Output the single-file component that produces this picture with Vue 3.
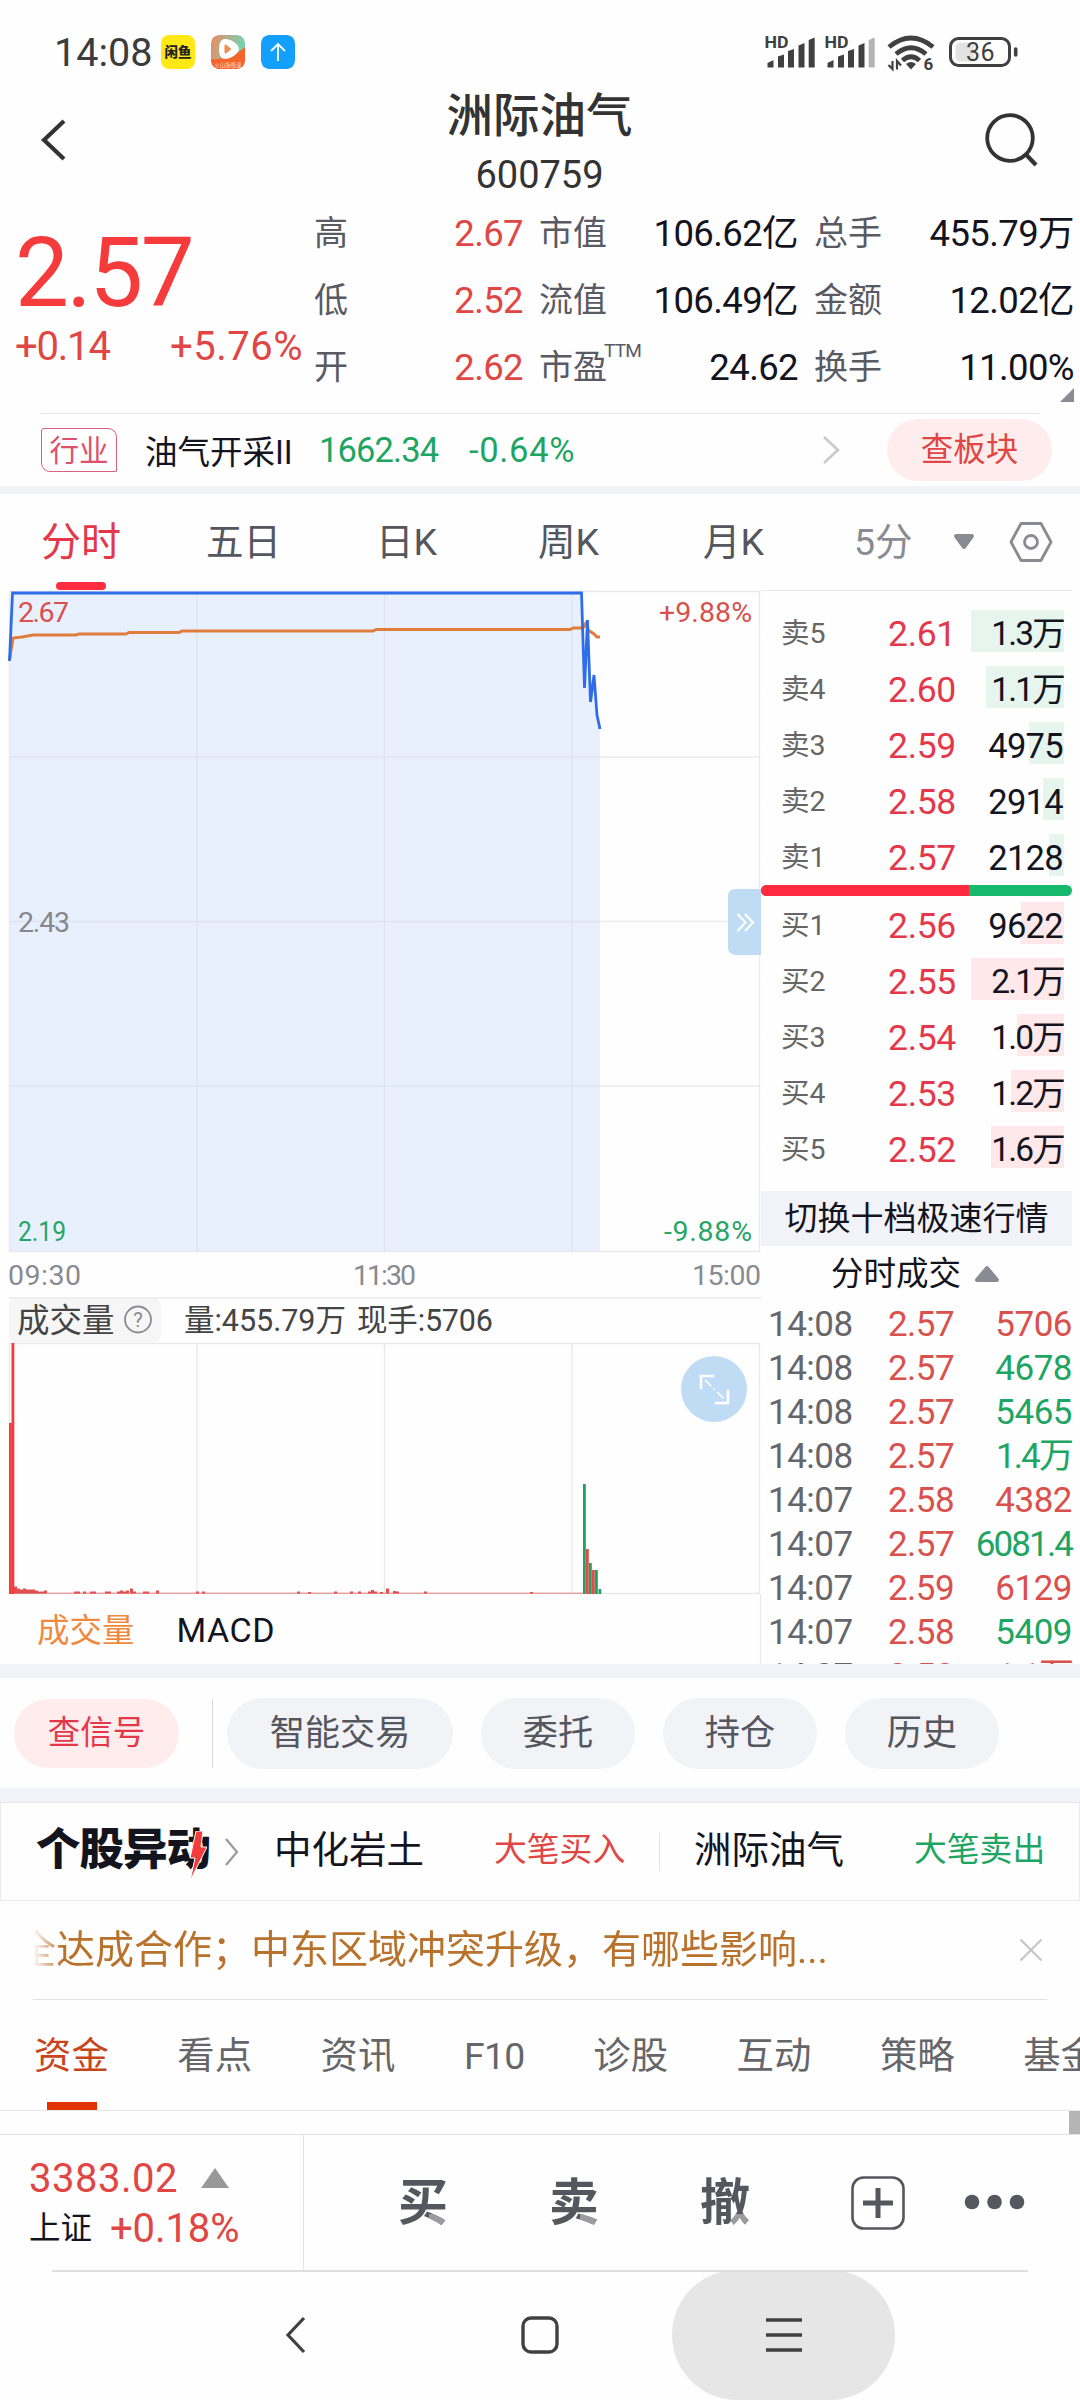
<script setup>
const stats = [
  { k: '高', v: '2.67', up: true }, { k: '市值', v: '106.62亿' }, { k: '总手', v: '455.79万' },
  { k: '低', v: '2.52', up: true }, { k: '流值', v: '106.49亿' }, { k: '金额', v: '12.02亿' },
  { k: '开', v: '2.62', up: true }, { k: '市盈', sup: 'TTM', v: '24.62' }, { k: '换手', v: '11.00%' },
]
const periods = [
  { t: '五日', w: 170 }, { t: '日K', w: 162 }, { t: '周K', w: 165 }, { t: '月K', w: 151 },
]
const sells = [
  { k: '卖5', p: '2.61', v: '1.3万', w: 93 },
  { k: '卖4', p: '2.60', v: '1.1万', w: 78 },
  { k: '卖3', p: '2.59', v: '4975', w: 35 },
  { k: '卖2', p: '2.58', v: '2914', w: 21 },
  { k: '卖1', p: '2.57', v: '2128', w: 15 },
]
const buys = [
  { k: '买1', p: '2.56', v: '9622', w: 43 },
  { k: '买2', p: '2.55', v: '2.1万', w: 93 },
  { k: '买3', p: '2.54', v: '1.0万', w: 47 },
  { k: '买4', p: '2.53', v: '1.2万', w: 53 },
  { k: '买5', p: '2.52', v: '1.6万', w: 73 },
]
const trades = [
  { t: '14:08', p: '2.57', v: '5706', up: true },
  { t: '14:08', p: '2.57', v: '4678' },
  { t: '14:08', p: '2.57', v: '5465' },
  { t: '14:08', p: '2.57', v: '1.4万', tight: true },
  { t: '14:07', p: '2.58', v: '4382', up: true },
  { t: '14:07', p: '2.57', v: '6081.4', tight: true },
  { t: '14:07', p: '2.59', v: '6129', up: true },
  { t: '14:07', p: '2.58', v: '5409' },
  { t: '14:07', p: '2.58', v: '1.1万', up: true, tight: true },
]
const actions = [{ t: '智能交易', w: 226 }, { t: '委托', w: 154 }, { t: '持仓', w: 154 }, { t: '历史', w: 154 }]
const infoTabs = ['资金', '看点', '资讯', 'F10', '诊股', '互动', '策略', '基金']

// [x, height] of the small red volume bars along the baseline
const smallBars = [
  [14, 7], [17, 5], [20, 4], [23, 5], [26, 4], [29, 4], [32, 4], [35, 3], [38, 2], [41, 2], [44, 3],
  [74, 2], [77, 2], [83, 2], [90, 2], [93, 2], [105, 2], [108, 2], [117, 2], [120, 3], [123, 2], [126, 3], [130, 5], [133, 2],
  [143, 2], [146, 2], [156, 3], [196, 2], [202, 2], [297, 2], [308, 1.5], [334, 2], [350, 2], [358, 2],
  [368, 2], [371, 3.5], [374, 2], [380, 1.5], [386, 5], [393, 2.5], [396, 2], [424, 2], [530, 1.5],
]
const bigBars = [
  { x: 9, y: 1423, c: '#f23b3b' }, { x: 11.5, y: 1343, c: '#f23b3b' },
  { x: 583, y: 1484, c: '#1aa565' }, { x: 586, y: 1549, c: '#d9504c' },
  { x: 589, y: 1563, c: '#1aa565' }, { x: 592, y: 1570, c: '#d9504c' },
  { x: 595, y: 1570, c: '#1aa565' }, { x: 598.5, y: 1589, c: '#1aa565' },
]
</script>

<template>
  <div class="screen">
    <div class="status">
      <span class="clock">14:08</span>
      <span class="app fish">闲鱼</span>
      <svg class="app" width="34" height="34" viewBox="0 0 34 34">
        <defs>
          <linearGradient id="g1" x1="0" y1="0" x2="1" y2="0.3"><stop offset="0" stop-color="#ef8a62" /><stop offset="1" stop-color="#6fd6b4" /></linearGradient>
        </defs>
        <rect width="34" height="34" rx="8" fill="url(#g1)" />
        <path d="M0 24 Q18 26 34 12 V26 A8 8 0 0 1 26 34 H8 A8 8 0 0 1 0 26 Z" fill="#f4642b" />
        <path d="M14 4 C21 4 28 10 28 14 C28 18 20 24 14 24 C10 24 8 20 8 14 C8 8 10 4 14 4 Z" fill="#fff" />
        <path d="M14.500 10.500 L19 14 L14.500 17.500 Z" fill="#f08c50" stroke="#f08c50" stroke-width="2" stroke-linejoin="round" />
        <text x="17" y="31.500" font-size="5.500" text-anchor="middle" fill="#ffd9c4">火山版极速</text>
      </svg>
      <svg class="app" width="34" height="34" viewBox="0 0 34 34">
        <rect width="34" height="34" rx="8" fill="#12a0fb" />
        <path d="M17 26 V9 M10 16 L17 9 L24 16" fill="none" stroke="#fff" stroke-width="1.800" />
      </svg>
      <svg class="sys" width="260" height="50" viewBox="760 28 260 50">
        <g v-for="o in [0, 60]" :key="o" :transform="`translate(${o} 0)`" fill="#404040">
          <text x="764.500" y="47.800" font-size="16" font-weight="700" textLength="24" lengthAdjust="spacingAndGlyphs">HD</text>
          <path d="M767.500 67.500 V63 L773.500 60 V67.500 Z M778 67.500 V56.500 L784 54.500 V67.500 Z M788 67.500 V51 L794 49 V67.500 Z M798.500 67.500 V45.500 L804.500 43 V67.500 Z" />
          <path d="M808.700 67.500 V40 L814.700 37.500 V67.500 Z" :fill="o ? '#b4b4b4' : '#404040'" />
        </g>
        <g fill="none" stroke="#404040" stroke-width="4.800">
          <path d="M889 47 Q911 29 933 47" />
          <path d="M896 54 Q911 41.500 926 54" />
          <path d="M902.500 60.500 Q911 53 919.500 60.500" />
        </g>
        <path d="M906 64 Q911 60 916 64 L911 69.500 Z" fill="#404040" />
        <path d="M892.500 61 V69 L888.500 65 M897 69.500 V61 L901 65.500" fill="none" stroke="#404040" stroke-width="2.200" />
        <text x="923.500" y="70" font-size="17" font-weight="700" fill="#404040">6</text>
        <rect x="950.500" y="38.500" width="59" height="27" rx="8" fill="none" stroke="#404040" stroke-width="3" />
        <path d="M962 42.500 H974 V61.500 H962 Q955.500 61.500 955.500 56 V48 Q955.500 42.500 962 42.500" fill="#e3e3e3" />
        <path d="M1015.700 49 V55" stroke="#404040" stroke-width="3.600" stroke-linecap="round" />
        <text x="966" y="61" font-size="25" textLength="28.500" fill="#404040">36</text>
      </svg>
    </div>

    <header class="head">
      <svg class="back" width="30" height="50" viewBox="0 0 30 50"><path d="M26 6 L6 25 L26 44" fill="none" stroke="#333" stroke-width="4.200" /></svg>
      <div class="title"><b>洲际油气</b><span>600759</span></div>
      <svg width="56" height="56" viewBox="0 0 56 56"><circle cx="27" cy="26" r="22.800" fill="none" stroke="#333" stroke-width="3.800" /><path d="M43 42.500 L53 53" stroke="#333" stroke-width="4.200" /></svg>
    </header>

    <section class="quote">
      <div class="price">
        <div class="big">2.57</div>
        <div class="chg"><span>+0.14</span><span>+5.76%</span></div>
      </div>
      <div class="stats">
        <div v-for="s in stats" :key="s.k" class="stat">
          <span class="k">{{ s.k }}<sup v-if="s.sup">{{ s.sup }}</sup></span>
          <span class="v" :class="{ up: s.up }">{{ s.v }}</span>
        </div>
      </div>
      <i class="corner"></i>
    </section>

    <section class="industry">
      <span class="tag">行业</span>
      <span class="iname">油气开采II</span>
      <span class="ival">1662.34</span>
      <span class="ipct">-0.64%</span>
      <svg width="20" height="32" viewBox="0 0 20 32"><path d="M2 3 L16 16 L2 29" fill="none" stroke="#c8c8cc" stroke-width="2.500" /></svg>
      <span class="pill-red board">查板块</span>
    </section>
    <div class="band thin"></div>

    <nav class="periods">
      <span class="on">分时</span>
      <span v-for="p in periods" :key="p.t" :style="{ width: p.w + 'px' }">{{ p.t }}</span>
      <span class="min">5分</span>
      <svg class="tri" width="24" height="18" viewBox="0 0 24 18"><path d="M4 3 H20 L12 14 Z" fill="#8a8a92" stroke="#8a8a92" stroke-width="4" stroke-linejoin="round" /></svg>
      <svg width="44" height="42" viewBox="0 0 44 42"><path d="M12 2.500 H32 L42 21 L32 39.500 H12 L2 21 Z" fill="none" stroke="#8a8a92" stroke-width="2.800" stroke-linejoin="round" /><circle cx="22" cy="21" r="6.500" fill="none" stroke="#8a8a92" stroke-width="2.800" /></svg>
    </nav>

    <main class="market">
      <svg class="chart" width="761" height="1074" viewBox="0 590 761 1074">
        <path d="M9.500 661 L12.500 593 H581.500 L584.500 688 L587.500 620 L590.500 702 L594 675 L597 715 L600 729 V1251 H9.500 Z" fill="#e8f0fe" />
        <g stroke="#dfe4ee" stroke-width="1.300">
          <path d="M197 592 V1251 M384.500 592 V1251 M572 592 V1251 M10 757 H600 M10 921.500 H600 M10 1086 H600" />
          <path d="M600 757 H760 M600 921.500 H760 M600 1086 H760" stroke="#ececee" />
        </g>
        <path d="M9.500 591.500 H759.500 V1251.500 H9.500 Z M9 1298 H761 M9.500 1343.500 H759.500 V1593.500 H9.500 Z M197 1344 V1593 M384.500 1344 V1593 M572 1344 V1593 M760.500 1594 V1664" fill="none" stroke="#e9e9ec" stroke-width="1.300" />
        <path d="M9.500 660 L13 638 L22 637 L33 635 H76 L79 634 H126 L129 632.500 H179 L182 631 H373 L376 629.500 H570 L573 628 H583 L586 623 L588 630 L594 634 L597 637 H600" fill="none" stroke="#e07c3c" stroke-width="3" />
        <path d="M9.500 661 L12.500 593 H581.500 L584.500 688 L587.500 620 L590.500 702 L594 675 L597 715 L600 729" fill="none" stroke="#2f6de8" stroke-width="2.800" />
        <g font-size="28.500">
          <text x="18" y="622" textLength="51" fill="#d9504c">2.67</text>
          <text x="659" y="622" textLength="93" fill="#d9504c">+9.88%</text>
          <text x="18" y="932" textLength="52" fill="#87878c">2.43</text>
          <text x="18" y="1241" textLength="48" lengthAdjust="spacingAndGlyphs" fill="#27a567">2.19</text>
          <text x="664" y="1241" textLength="88" fill="#27a567">-9.88%</text>
          <text x="8" y="1285" textLength="73" fill="#8a8a90">09:30</text>
          <text x="353" y="1285" textLength="63" fill="#8a8a90">11:30</text>
          <text x="692" y="1285" textLength="69" fill="#8a8a90">15:00</text>
        </g>
        <path d="M761 889 H736 Q728 889 728 897 V947 Q728 955 736 955 H761 Z" fill="#c0dcf5" />
        <path d="M737.500 914 L745.500 922.500 L737.500 931 M745 914 L753 922.500 L745 931" fill="none" stroke="#fff" stroke-width="2" />

        <rect x="9" y="1299" width="152" height="43" rx="7" fill="#f6f6f7" />
        <text x="17" y="1332" font-size="32.500" fill="#444">成交量</text>
        <circle cx="138" cy="1319.500" r="13" fill="none" stroke="#8a8a90" stroke-width="1.800" />
        <text x="138" y="1327" font-size="20" text-anchor="middle" fill="#8a8a90">?</text>
        <text x="184" y="1330.500" font-size="30.500" textLength="162" fill="#444">量:455.79万</text>
        <text x="357" y="1330.500" font-size="30.500" textLength="136" fill="#444">现手:5706</text>

        <path d="M14 1593.200 H583" stroke="#e68080" stroke-width="1" />
        <rect v-for="b in smallBars" :key="b[0]" :x="b[0]" :y="1593.500 - b[1]" width="3" :height="b[1]" fill="#e05050" />
        <rect v-for="b in bigBars" :key="b.x" :x="b.x" :y="b.y" width="2.800" :height="1594 - b.y" :fill="b.c" />
        <circle cx="714" cy="1389" r="33" fill="#c0dcf5" />
        <path d="M701 1389 V1376 H714 M715 1403 H728 V1390" fill="none" stroke="#fff" stroke-width="2.600" />
        <path d="M705 1380 L725 1400" stroke="#fff" stroke-width="1.500" stroke-dasharray="9 3 2 3" />
        <text x="37" y="1642" font-size="32.500" fill="#ee8a40">成交量</text>
        <text x="176.500" y="1641.500" font-size="34" textLength="98" fill="#14141e">MACD</text>
      </svg>

      <aside class="book">
        <div class="sell">
          <div v-for="r in sells" :key="r.k" class="lv"><span>{{ r.k }}</span><em>{{ r.p }}</em><span class="q"><i :style="{ width: r.w + 'px' }"></i><b :class="{ wan: r.v.includes('万') }">{{ r.v }}</b></span></div>
        </div>
        <div class="ratio"><i></i></div>
        <div class="buy">
          <div v-for="r in buys" :key="r.k" class="lv"><span>{{ r.k }}</span><em>{{ r.p }}</em><span class="q"><i :style="{ width: r.w + 'px' }"></i><b :class="{ wan: r.v.includes('万') }">{{ r.v }}</b></span></div>
        </div>
        <div class="switch">切换十档极速行情</div>
        <div class="thead">分时成交<svg width="26" height="20" viewBox="0 0 26 20"><path d="M3 16 H23 L13 4 Z" fill="#8a8a92" stroke="#8a8a92" stroke-width="4" stroke-linejoin="round" /></svg></div>
        <div v-for="(r, i) in trades" :key="i" class="tr"><span>{{ r.t }}</span><em>{{ r.p }}</em><b :class="{ up: r.up, tight: r.tight }">{{ r.v }}</b></div>
      </aside>
    </main>

    <div class="band b14"></div>
    <section class="actions">
      <span class="pill-red sig">查信号</span>
      <i></i>
      <span v-for="a in actions" :key="a.t" class="act" :style="{ width: a.w + 'px' }">{{ a.t }}</span>
    </section>
    <div class="band b14"></div>

    <section class="moves">
      <span class="logo">个股异动
        <svg width="18" height="50" viewBox="0 0 18 50"><path d="M7 0 H14 L12 16 H18 L1 50 L6 27 H1 Z" fill="#f23b3b" stroke="#fff" stroke-width="1" /></svg>
      </span>
      <svg class="arr" width="16" height="30" viewBox="0 0 16 30"><path d="M2 2 L13 15 L2 28" fill="none" stroke="#99999e" stroke-width="2.200" /></svg>
      <span class="nm">中化岩土</span><span class="op up">大笔买入</span>
      <i></i>
      <span class="nm">洲际油气</span><span class="op down">大笔卖出</span>
    </section>

    <section class="notice">
      <div class="clip"><span>全达成合作；中东区域冲突升级，有哪些影响...</span></div>
      <svg width="24" height="24" viewBox="0 0 24 24"><path d="M1.500 1.500 L22.500 22.500 M22.500 1.500 L1.500 22.500" stroke="#c6c6ca" stroke-width="2.200" /></svg>
    </section>

    <nav class="info">
      <span v-for="(t, i) in infoTabs" :key="t" :class="{ on: i === 0 }">{{ t }}</span>
    </nav>
    <div class="peek"><i></i></div>

    <section class="dock">
      <div class="index">
        <div class="l1">3383.02<svg width="28" height="20" viewBox="0 0 28 20"><path d="M0 20 L14 0 L28 20 Z" fill="#999" /></svg></div>
        <div class="l2"><span>上证</span>+0.18%</div>
      </div>
      <div class="btns">
        <span>买</span><span>卖</span><span>撤</span>
        <svg width="54" height="54" viewBox="0 0 54 54"><rect x="1.500" y="1.500" width="51" height="51" rx="11" fill="none" stroke="#55565e" stroke-width="2.600" /><path d="M27 12 V42 M12 27 H42" stroke="#55565e" stroke-width="5" /></svg>
        <svg class="dots" width="62" height="16" viewBox="0 0 62 16"><g fill="#55565e"><circle cx="8" cy="8" r="7.300" /><circle cx="30.500" cy="8" r="7.300" /><circle cx="53" cy="8" r="7.300" /></g></svg>
      </div>
    </section>

    <footer class="sysnav">
      <svg class="nb" width="24" height="38" viewBox="0 0 24 38"><path d="M20 2 L4 19 L20 36" fill="none" stroke="#404040" stroke-width="3.200" /></svg>
      <svg class="nh" width="38" height="38" viewBox="0 0 38 38"><rect x="2" y="2" width="34" height="34" rx="8" fill="none" stroke="#404040" stroke-width="3.400" /></svg>
      <div class="nm3"><svg width="36" height="34" viewBox="0 0 36 34"><path d="M0 2 H36 M0 17 H36 M0 32 H36" stroke="#404040" stroke-width="3.600" /></svg></div>
    </footer>
  </div>
</template>

<style>
body { margin: 0; background: #fefefe; }
</style>

<style scoped>
.screen { width: 1080px; height: 2400px; overflow: hidden; background: #fefefe; font-family: Roboto, "Noto Sans CJK SC", sans-serif; color: #14141e; display: flex; flex-direction: column; }
.screen * { box-sizing: border-box; }
.screen > * { flex: none; }
i, em { font-style: normal; }
svg { display: block; flex: none; }
.up { color: #e04644; }
.down { color: #1ea564; }

.status { height: 100px; display: flex; align-items: flex-start; padding-left: 54px; }
.clock { width: 107px; font-size: 39.500px; line-height: 105px; letter-spacing: 0; color: #3c3c3c; }
.app { width: 34px; height: 34px; border-radius: 8px; margin: 35px 16px 0 0; }
.fish { background: #ffe815; font-size: 13.500px; font-weight: 900; line-height: 34px; text-align: center; color: #222; }
.sys { margin: 28px 0 0 449px; }

.head { height: 99px; display: flex; justify-content: space-between; padding: 0 41px 0 38px; }
.back { margin-top: 15px; }
.title { display: flex; flex-direction: column; align-items: center; width: 300px; margin-left: 28px; color: #333; }
.title b { margin-top: 1px; font-size: 46.500px; font-weight: 500; line-height: 30px; }
.title span { font-size: 38px; line-height: 30px; margin-top: 29px; }
.head > svg:last-child { margin-top: 12px; }

.quote { position: relative; height: 214px; display: flex; margin: 0 41px 0 0; }
.price { width: 314px; padding-left: 15px; flex: none; }
.big { font-size: 96px; line-height: 100px; margin-top: 24px; letter-spacing: -2.500px; color: #f53b3b; }
.chg { display: flex; font-size: 40px; line-height: 40px; margin-top: 4px; color: #e04644; letter-spacing: -1.200px; }
.chg span:first-child { width: 155px; }
.chg span:last-child { letter-spacing: 0.500px; }
.stats { display: grid; grid-template-columns: 209px 259px 260px; column-gap: 16px; grid-auto-rows: 67px; flex: none; padding-top: 1px; }
.stat { display: flex; justify-content: space-between; line-height: 67px; white-space: nowrap; }
.k { font-size: 34px; color: #5a5a62; }
.k sup { display: inline-block; font-size: 19px; line-height: 20px; vertical-align: 22px; letter-spacing: -0.800px; margin-left: -3px; }
.v { font-size: 36.500px; letter-spacing: -0.600px; }
.corner { position: absolute; left: 1060px; top: 189px; border-left: 14px solid transparent; border-bottom: 14px solid #8a8a92; }

.industry { height: 73px; display: flex; align-items: center; position: relative; padding: 0 28px 0 41px; }
.industry::before { content: ""; position: absolute; left: 41px; right: 41px; top: 0; height: 1px; background: #e6e6ea; }
.tag { width: 76px; height: 44px; border: 1.500px solid #d9607a; border-radius: 3px 9px 1px 9px; font-size: 29.500px; line-height: 44px; text-align: center; color: #e0506a; }
.iname { margin-left: 28px; width: 174px; font-size: 32.500px; }
.ival { width: 150px; font-size: 34.500px; letter-spacing: -0.900px; color: #1ea564; }
.ipct { width: 353px; font-size: 34.500px; letter-spacing: 0.700px; color: #1ea564; }
.pill-red { background: #ffedee; border-radius: 36px; font-size: 32.500px; text-align: center; color: #e04644; }
.board { margin-left: auto; width: 165px; height: 62px; line-height: 63px; }

.band { background: #f2f3f8; }
.thin { height: 8px; }
.b14 { height: 14px; }

.periods { height: 96px; display: flex; align-items: center; padding: 0 27px 0 41px; line-height: 97px; font-size: 37.500px; color: #55565e; }
.periods .on { position: relative; width: 165px; height: 96px; font-size: 40px; color: #e5374a; }
.periods .on::after { content: ""; position: absolute; left: 15px; bottom: 0; width: 50px; height: 8px; border-radius: 4px; background: #ff2d42; }
.periods .min { width: 98px; color: #8a8a92; }
.periods .tri { margin-right: 33px; }

.market { height: 1074px; display: flex; overflow: hidden; }
.chart { flex: none; }
.book { width: 311px; border-top: 1px solid #e9e9ec; }
.sell { padding-top: 15px; height: 294px; }
.lv { display: flex; height: 56px; align-items: center; line-height: 56px; padding-left: 20px; }
.lv > span:first-child { width: 80px; font-size: 28.500px; color: #666; }
.lv em { width: 122px; text-align: center; font-size: 35.500px; letter-spacing: -0.300px; color: #e5374a; }
.q { position: relative; width: 81px; height: 56px; }
.q i { position: absolute; right: 0; top: 4px; height: 42px; background: #e6f5ee; }
.buy .q i { background: #ffe8ea; }
.q b { position: absolute; right: 1px; top: 0; font-weight: 400; font-size: 34.500px; letter-spacing: -0.700px; white-space: nowrap; }
.q b.wan { font-size: 33.500px; letter-spacing: -1.800px; right: 0; }
.ratio { position: relative; height: 11px; border-radius: 6px; background: #16b96e; overflow: hidden; }
.ratio i { display: block; width: 208px; height: 11px; background: #ff2a40; }
.buy { height: 295px; padding-top: 2px; }
.switch { height: 55px; background: #f2f3f8; font-size: 33px; line-height: 56px; text-align: center; }
.thead { display: flex; align-items: center; gap: 13px; padding-left: 70px; height: 55px; font-size: 32.500px; line-height: 52px; }
.tr { display: flex; height: 44px; line-height: 47px; font-size: 35px; letter-spacing: -0.500px; padding: 0 0 0 7px; }
.tr span { flex: none; width: 103px; color: #66666a; }
.tr em { flex: none; width: 100px; text-align: center; color: #d9504c; }
.tr b { flex: 1; min-width: 0; text-align: right; font-weight: 400; white-space: nowrap; color: #1ea564; }
.tr b.tight { letter-spacing: -1.900px; }
.tr b.up { color: #d9504c; }

.actions { height: 110px; display: flex; align-items: center; padding-left: 14px; }
.sig { width: 165px; height: 69px; line-height: 69px; color: #e5374a; }
.actions > i { width: 1px; height: 69px; margin: 0 14px 0 33px; background: #d8d8dc; }
.act { height: 71px; margin-right: 28px; border-radius: 36px; background: #f2f3f7; font-size: 35.200px; line-height: 71px; text-align: center; color: #55565e; }

.moves { height: 99px; display: flex; align-items: center; border: 1.500px solid #e9e9ec; padding-left: 35px; white-space: nowrap; line-height: 93px; }
.moves > span { margin-top: -3px; }
.logo { position: relative; width: 188px; font-size: 44.500px; font-weight: 900; letter-spacing: -1px; }
.logo svg { position: absolute; left: 153px; top: 27px; }
.arr { margin-right: 34px; }
.nm { width: 220px; font-size: 37.500px; }
.op { width: 165px; font-size: 32.800px; }
.moves > i { width: 1px; height: 38px; margin-right: 34px; background: #e4e4e8; }

.notice { height: 99px; margin: 0 33px; display: flex; align-items: center; justify-content: space-between; padding-right: 4px; border-bottom: 1.500px solid #e2e2e4; }
.clip { width: 860px; overflow: hidden; white-space: nowrap; font-size: 39px; line-height: 98px; color: #b8722c; -webkit-mask-image: linear-gradient(to right, transparent, #000 30px); mask-image: linear-gradient(to right, transparent, #000 30px); }
.clip span { margin-left: -16px; }

.info { height: 111px; display: flex; gap: 68.500px; padding-left: 34px; overflow: hidden; white-space: nowrap; border-bottom: 1px solid #e9e9ec; font-size: 37.400px; line-height: 112px; color: #66666a; }
.info span { position: relative; flex: none; }
.info span:nth-child(4) { letter-spacing: -0.600px; }
.info .on { color: #c8451c; }
.info .on::after { content: ""; position: absolute; left: 13px; bottom: 0; width: 50px; height: 8px; background: #e03300; }
.peek { height: 24px; border-bottom: 1.500px solid #e2e2e6; display: flex; justify-content: flex-end; }
.peek i { width: 11px; background: #b5b5b5; }

.dock { height: 135px; display: flex; }
.index { width: 304px; border-right: 1px solid #e2e2e6; padding: 24px 0 0 29px; color: #e04644; font-size: 40px; }
.l1 { display: flex; align-items: center; gap: 23px; line-height: 40px; letter-spacing: 0.500px; }
.l1 svg { margin-top: -3px; }
.l2 { display: flex; align-items: center; line-height: 40px; margin-top: 10px; letter-spacing: -0.100px; }
.l2 span { width: 81px; font-size: 31.500px; letter-spacing: 0; color: #14141e; }
.btns { display: flex; align-items: center; padding-left: 94px; }
.btns span { width: 50px; margin-right: 101px; font-size: 50px; font-weight: 700; line-height: 60px; color: transparent; background: linear-gradient(#9b9ba0, #9b9ba0) 100% 90% / 38% 24% no-repeat, #55565e; -webkit-background-clip: text; background-clip: text; }
.dots { margin-left: 59px; margin-top: -2px; }

.sysnav { position: relative; height: 130px; display: flex; align-items: center; padding-left: 284px; }
.sysnav::before { content: ""; position: absolute; left: 52px; right: 52px; top: 0; height: 1.500px; background: #dedee2; }
.nh { margin: 0 113px 0 213px; }
.nm3 { width: 223px; height: 130px; border-radius: 66px; background: #e6e6e6; display: flex; align-items: center; justify-content: center; }
</style>
